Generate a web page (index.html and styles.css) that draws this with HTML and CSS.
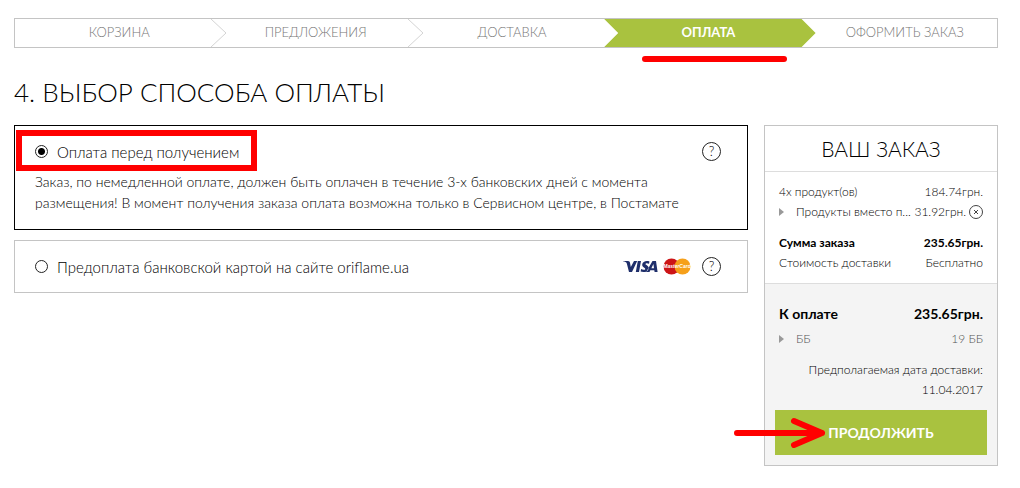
FILE: index.html
```html
<!DOCTYPE html>
<html lang="ru">
<head>
<meta charset="utf-8">
<meta name="viewport" content="width=device-width, initial-scale=1">
<title>Выбор способа оплаты</title>
<link rel="stylesheet" href="styles.css">
</head>
<body>
<div class="page">
  <nav aria-label="Шаги заказа">
    <ol class="steps">
      <li class="step">КОРЗИНА<svg class="chevron" viewBox="0 0 16 28" aria-hidden="true"><path d="M0 0L15 14L0 28"/></svg></li>
      <li class="step">ПРЕДЛОЖЕНИЯ<svg class="chevron" viewBox="0 0 16 28" aria-hidden="true"><path d="M0 0L15 14L0 28"/></svg></li>
      <li class="step">ДОСТАВКА</li>
      <li class="step step-active" aria-current="step"><span class="step-label">ОПЛАТА</span><span class="underline-mark"></span></li>
      <li class="step">ОФОРМИТЬ ЗАКАЗ</li>
    </ol>
  </nav>
  <h1 class="title">4. ВЫБОР СПОСОБА ОПЛАТЫ</h1>
  <div class="columns">
    <main class="options">
      <section class="option option-selected">
        <div class="option-row">
          <input class="radio" type="radio" name="payment" id="pay-before" checked>
          <label class="option-label" for="pay-before">Оплата перед получением</label>
          <button class="help" type="button" aria-label="Справка">?</button>
        </div>
        <p class="option-text">Заказ, по немедленной оплате, должен быть оплачен в течение 3-х банковских дней с момента размещения! В момент получения заказа оплата возможна только в Сервисном центре, в Постамате</p>
        <span class="frame-mark"></span>
      </section>
      <section class="option">
        <div class="option-row">
          <input class="radio" type="radio" name="payment" id="pay-card">
          <label class="option-label" for="pay-card">Предоплата банковской картой на сайте oriflame.ua</label>
          <svg class="cards" viewBox="0 0 70 18" role="img" aria-label="Visa, MasterCard">
            <path class="visa" d="M1 3h5c1.200 0 1.800.7 2 1.800l.8 4.200L12 3h3.200L10 14H7L4.800 5.500C4.400 4.200 3 3.600 1 3.300zM15.800 3H19l-2 11h-3.200zM27.500 3.400l-.5 2.400c-1.300-.6-3.400-.8-3.500.2 0 1.100 3.300 1.500 3.100 4.200-.2 3.500-4.500 4.600-8 3.400l.5-2.500c1.600.8 4 1 4.100-.2.1-1.200-3.200-1.500-3-4.300.2-3.400 4.300-4.400 7.300-3.200zM30.500 3H34l1.600 11h-3l-.3-1.700h-4L27.500 14h-3.300zM31.400 6l-2 4.200h2.600z"/>
            <circle class="mc-red" cx="49.500" cy="8.500" r="8"/>
            <circle class="mc-yellow" cx="60.500" cy="8.500" r="8"/>
            <text class="mc-text" x="55" y="10" text-anchor="middle">MasterCard</text>
          </svg>
          <button class="help" type="button" aria-label="Справка">?</button>
        </div>
      </section>
    </main>
    <aside class="summary">
      <h2 class="summary-title">ВАШ ЗАКАЗ</h2>
      <div class="summary-items">
        <div class="line"><span>4x продукт(ов)</span><span>184.74грн.</span></div>
        <div class="line"><span class="arrow"></span><span class="grow">Продукты вместо п...</span><span>31.92грн.</span><button class="remove" type="button" aria-label="Удалить"><svg viewBox="0 0 14 14" aria-hidden="true"><circle cx="7" cy="7" r="6.500"/><path d="M5 5l4 4M9 5l-4 4"/></svg></button></div>
        <div class="line line-sum"><span>Сумма заказа</span><span>235.65грн.</span></div>
        <div class="line"><span>Стоимость доставки</span><span>Бесплатно</span></div>
      </div>
      <div class="summary-total">
        <div class="line line-total"><span>К оплате</span><span>235.65грн.</span></div>
        <div class="line line-points"><span class="arrow"></span><span class="grow">ББ</span><span>19 ББ</span></div>
        <p class="delivery">Предполагаемая дата доставки:<br>11.04.2017</p>
        <button class="continue" type="button">ПРОДОЛЖИТЬ<svg class="pointer-mark" viewBox="0 0 94 32" aria-hidden="true"><path d="M3 16H88M60 4L88 16L60 28"/></svg></button>
      </div>
    </aside>
  </div>
</div>
</body>
</html>
```
FILE: styles.css
```css
* { box-sizing: border-box; }
body {
  margin: 0;
  background: #fff;
  color: #000;
  font-family: Lato, "Open Sans", sans-serif;
  font-weight: 300;
}
button { font-family: inherit; padding: 0; cursor: pointer; }
.page { padding: 18px 22px 22px 14px; }

.steps {
  display: flex;
  margin: 0;
  padding: 0;
  list-style: none;
  border: 1px solid #c4c4c4;
}
.step {
  position: relative;
  flex: 1;
  height: 28px;
  padding-left: 12px;
  line-height: 27px;
  font-size: 13px;
  text-align: center;
  color: #777;
}
.chevron {
  position: absolute;
  top: 0;
  right: -16px;
  width: 16px;
  height: 28px;
  fill: none;
  stroke: #d4d4d4;
}
.step-active { color: #fff; font-weight: 700; }
.step-active::before {
  content: "";
  position: absolute;
  inset: 0 -15px 0 0;
  background: #a9c23f;
  clip-path: polygon(0 0, calc(100% - 14px) 0, 100% 50%, calc(100% - 14px) 100%, 0 100%, 14px 50%);
}
.step-label { position: relative; }
.underline-mark {
  position: absolute;
  left: 38px;
  right: 14px;
  top: 37px;
  height: 6px;
  border-radius: 3px;
  background: #f00;
}

.title {
  margin: 28px 0 17px;
  line-height: 32px;
  font-size: 26px;
  font-weight: 300;
  color: #000;
}
.columns { display: flex; align-items: flex-start; gap: 16px; }
.options { flex: 1; display: flex; flex-direction: column; gap: 10px; }
.option {
  position: relative;
  padding: 15px 26px;
  border: 1px solid #c4c4c4;
  padding-left: 20px;
}
.option-selected { border-color: #000; }
.option-row { display: flex; align-items: center; height: 21px; }
.radio {
  appearance: none;
  width: 13px;
  height: 13px;
  margin: 0 9px 0 0;
  border: 1px solid #222;
  border-radius: 50%;
}
.radio:checked { background: radial-gradient(circle, #000 3px, #fff 4px); }
.option-label { flex: 1; font-size: 15px; }
.help {
  width: 19px;
  height: 19px;
  border: 1px solid #222;
  border-radius: 50%;
  background: none;
  font-size: 13px;
  font-weight: 300;
  line-height: 17px;
  color: #000;
}
.option-text { margin: 9px 0 0; padding-bottom: 1px; font-size: 14px; line-height: 21px; }
.frame-mark {
  position: absolute;
  left: 1px;
  top: 4px;
  width: 241px;
  height: 41px;
  border: 6px solid #f00;
}
.cards { width: 70px; height: 18px; margin-right: 10px; }
.visa { fill: #1f2f6b; fill-rule: evenodd; }
.mc-red { fill: #cc1417; }
.mc-yellow { fill: #f6a01a; }
.mc-text { fill: #fff; font: italic 700 5px "Liberation Sans", sans-serif; }

.summary { width: 234px; border: 1px solid #c4c4c4; font-size: 12px; }
.summary-title {
  margin: 0;
  height: 46px;
  line-height: 45px;
  border-bottom: 1px solid #ddd;
  text-align: center;
  font-size: 21px;
  font-weight: 300;
}
.summary-items { padding: 10px 14px; }
.line { display: flex; align-items: center; justify-content: space-between; height: 20px; line-height: 18px; white-space: nowrap; }
.arrow {
  width: 5px;
  height: 8px;
  margin-right: 12px;
  background: #999;
  clip-path: polygon(0 0, 100% 50%, 0 100%);
}
.grow { flex: 1; }
.remove { width: 14px; height: 14px; margin-left: 3px; border: 0; background: none; }
.remove svg { display: block; fill: none; stroke: #444; }
.line-sum { margin-top: 11px; font-weight: 700; }
.summary-total { padding: 20px 10px 10px; border-top: 1px solid #ddd; background: #f4f4f4; }
.summary-total .line, .delivery { margin-left: 4px; margin-right: 4px; }
.line-total { font-size: 14px; font-weight: 700; }
.line-points { margin-top: 5px; color: #555; }
.delivery { margin-top: 11px; margin-bottom: 10px; line-height: 20px; text-align: right; }
.continue {
  position: relative;
  display: block;
  width: 100%;
  height: 45px;
  border: 0;
  background: #a9c23f;
  color: #fff;
  font-size: 14px;
  font-weight: 700;
}
.pointer-mark {
  position: absolute;
  left: -41px;
  top: 7px;
  width: 94px;
  height: 32px;
  fill: none;
  stroke: #f00;
  stroke-width: 6px;
  stroke-linecap: round;
  stroke-linejoin: round;
}
```
